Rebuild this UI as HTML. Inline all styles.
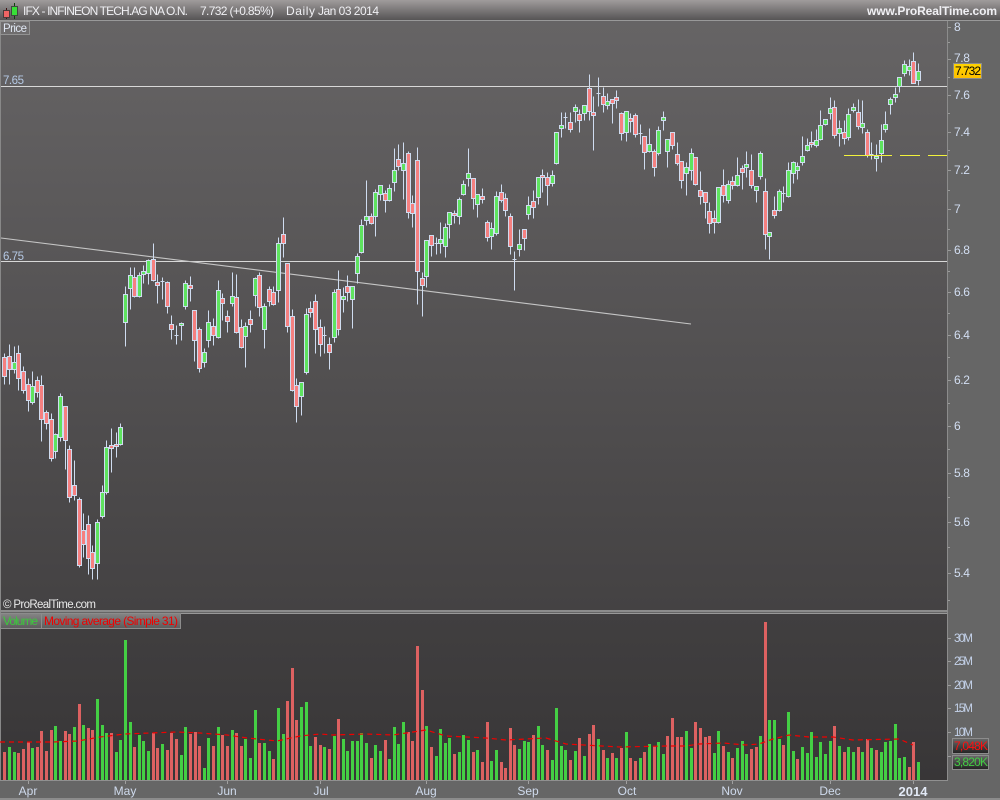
<!DOCTYPE html>
<html><head><meta charset="utf-8"><title>IFX</title>
<style>
html,body{margin:0;padding:0;background:#666;width:1000px;height:800px;overflow:hidden}
svg{display:block}
text{font-family:"Liberation Sans",Arial,sans-serif;font-size:12px}
</style></head><body>
<svg width="1000" height="800" viewBox="0 0 1000 800" xmlns="http://www.w3.org/2000/svg">
<defs>
<linearGradient id="top" x1="0" y1="0" x2="0" y2="1"><stop offset="0" stop-color="#a09c9c"/><stop offset="1" stop-color="#565455"/></linearGradient>
<linearGradient id="price" x1="0" y1="0" x2="0" y2="1"><stop offset="0" stop-color="#666465"/><stop offset="1" stop-color="#444243"/></linearGradient>
<linearGradient id="vol" x1="0" y1="0" x2="0" y2="1"><stop offset="0" stop-color="#413f40"/><stop offset="1" stop-color="#383637"/></linearGradient>
<linearGradient id="tab" x1="0" y1="0" x2="0" y2="1"><stop offset="0" stop-color="#848484"/><stop offset="1" stop-color="#5c5c5c"/></linearGradient>
<linearGradient id="box" x1="0" y1="0" x2="0" y2="1"><stop offset="0" stop-color="#6a6a6a"/><stop offset="1" stop-color="#222"/></linearGradient>
<linearGradient id="gold" x1="0" y1="0" x2="0" y2="1"><stop offset="0" stop-color="#ffd400"/><stop offset="1" stop-color="#ffbf00"/></linearGradient>
</defs>
<rect width="1000" height="800" fill="#666"/>
<rect width="1000" height="20" fill="url(#top)"/>
<rect y="20" width="1000" height="1" fill="#999"/>
<rect x="1" y="21" width="946" height="589" fill="url(#price)"/>
<rect x="0" y="21" width="1" height="759" fill="#888"/>
<rect x="0" y="610" width="948" height="2" fill="#8c8c8c"/>
<rect x="0" y="613" width="948" height="1" fill="#999"/>
<rect x="1" y="614" width="946" height="166" fill="url(#vol)"/>
<rect x="947" y="21" width="1" height="759" fill="#8c8c8c"/>
<rect x="0" y="780" width="948" height="1" fill="#909090"/>
<rect x="0" y="798" width="1000" height="2" fill="#8c8c8c"/>

<!-- logo -->
<g shape-rendering="crispEdges">
<rect x="6" y="8" width="1" height="11" fill="#401010"/>
<rect x="3.5" y="10.5" width="6" height="7" fill="#f06464" stroke="#4a3a3a" stroke-width="1"/>
<rect x="14" y="3" width="1" height="16" fill="#104010"/>
<rect x="11.5" y="6.5" width="6" height="9" fill="#38e038" stroke="#3f4a3f" stroke-width="1"/>
</g>

<!-- header text -->
<g fill="#f0f0f4">
<text x="23" y="15" textLength="165" lengthAdjust="spacing">IFX - INFINEON TECH.AG NA O.N.</text>
<text x="200" y="15" textLength="74" lengthAdjust="spacing">7.732 (+0.85%)</text>
<text x="286" y="15" textLength="29" lengthAdjust="spacing">Daily</text>
<text x="318" y="15" textLength="61" lengthAdjust="spacing">Jan 03 2014</text>
<text x="867" y="15" style="font-weight:700" textLength="130" lengthAdjust="spacing">www.ProRealTime.com</text>
</g>

<!-- Price tab -->
<rect x="0.5" y="21.5" width="29" height="13" fill="#6f6d6e" stroke="#929292"/>
<text x="3" y="32" fill="#dfe6f2" style="font-size:11.5px" textLength="24" lengthAdjust="spacing">Price</text>

<!-- lines -->
<g shape-rendering="crispEdges">
<rect x="1" y="86" width="946" height="1" fill="#d8d8d8"/>
<rect x="1" y="261" width="946" height="1" fill="#d8d8d8"/>
</g>
<path d="M1 238L691 324" stroke="#c6c6c6" stroke-width="1.1" fill="none"/>
<text x="3" y="84" fill="#b4c8e4" style="font-size:11.5px" textLength="21" lengthAdjust="spacing">7.65</text>
<text x="3" y="260" fill="#b4c8e4" style="font-size:11.5px" textLength="21" lengthAdjust="spacing">6.75</text>
<text x="3" y="608" fill="#e8e8e8" style="font-size:11.5px" textLength="93" lengthAdjust="spacing">© ProRealTime.com</text>

<!-- wicks + dojis -->
<g transform="translate(.5,.5)" shape-rendering="crispEdges">
<path fill="none" stroke="#cfdcf0" stroke-width="1" d="M4 353V384M9 344V384M14 346V373M18 345V390M23 366V393M28 378V411M32 371V404M37 376V397M41 375V441M46 410V429M51 413V461M55 433V458M60 393V441M65 406V469M69 445V502M74 460V500M79 497V567M83 513V557M88 515V574M92 545V579M97 519V579M102 485V518M106 440V494M111 428V472M116 432V457M120 423V445M125 286V346M130 267V309M134 267V297M139 272V297M143 265V283M148 259V284M153 243V281M157 274V303M162 277V299M160 281h4M167 281V313M171 315V339M176 325V344M174 335h4M181 322V340M185 280V309M190 276V301M194 310V361M199 327V372M204 348V367M208 310V347M213 318V345M218 280V338M222 293V320M227 310V332M232 272V306M236 274V333M241 319V348M245 322V367M250 310V332M255 277V306M259 272V316M264 303V348M269 286V306M273 286V305M278 237V302M283 217V257M287 263V332M292 309V391M296 378V422M301 382V415M306 308V374M310 301V317M315 294V353M320 319V356M324 326V353M322 335h4M329 337V369M334 289V342M338 270V335M343 287V312M347 275V301M352 286V328M357 253V283M361 219V253M366 180V225M371 213V224M375 189V236M380 185V200M385 190V212M389 184V201M394 148V191M398 144V170M403 142V199M408 151V218M412 195V227M417 147V304M422 272V316M426 240V287M431 235V256M436 237V254M434 243h4M440 222V253M445 223V257M449 212V238M454 210V223M459 197V224M463 180V195M468 148V186M473 178V209M477 194V217M482 188V203M487 220V241M491 222V249M496 191V235M501 184V202M505 193V216M510 213V254M514 251V290M512 259h4M519 229V256M524 229V250M528 196V219M533 190V218M538 177V204M542 169V192M547 172V205M552 170V186M556 132V164M561 112V137M565 112V128M563 117h4M570 112V132M575 104V122M579 109V132M584 105V120M589 74V120M593 96V150M598 77V106M596 93h4M603 87V112M607 93V109M612 99V123M616 90V108M621 112V140M626 111V141M630 113V132M635 113V137M640 124V144M638 133h4M644 136V169M649 128V152M654 149V176M658 126V155M663 111V130M667 139V167M672 132V149M677 142V165M681 161V188M686 162V195M691 148V180M695 157V185M700 171V204M705 192V218M709 202V233M714 210V233M718 187V223M723 169V202M728 180V203M732 176V189M737 157V186M742 165V189M746 151V177M751 154V188M756 186V202M760 151V179M765 178V249M769 232V259M774 196V218M779 189V211M783 186V202M781 193h4M788 162V197M793 161V183M797 162V179M802 136V165M807 138V151M811 131V147M816 129V147M820 110V140M825 119V125M830 97V119M834 100V138M839 120V146M844 120V144M848 108V140M853 103V112M858 99V129M862 100V133M867 129V157M871 142V159M869 154h4M876 144V171M881 124V162M885 111V132M890 97V114M895 87V102M899 77V92M904 60V76M909 59V75M913 52V83M918 63V85"/>
<path fill="#f58080" stroke="#cfdcf0" stroke-width="1" d="M2 357h4V376h-4zM7 356h4V369h-4zM16 353h4V378h-4zM21 371h4V390h-4zM26 384h4V400h-4zM35 380h4V392h-4zM39 385h4V419h-4zM44 412h4V423h-4zM49 419h4V458h-4zM63 406h4V440h-4zM67 449h4V497h-4zM72 485h4V495h-4zM77 499h4V565h-4zM81 530h4V544h-4zM86 524h4V558h-4zM90 552h4V568h-4zM109 445h4V448h-4zM114 444h4V446h-4zM132 277h4V296h-4zM151 259h4V280h-4zM155 282h4V285h-4zM165 282h4V306h-4zM169 324h4V329h-4zM188 285h4V288h-4zM192 310h4V340h-4zM197 329h4V368h-4zM211 326h4V335h-4zM220 298h4V303h-4zM225 316h4V321h-4zM234 297h4V332h-4zM239 327h4V347h-4zM248 319h4V324h-4zM257 275h4V307h-4zM267 289h4V301h-4zM271 292h4V304h-4zM281 234h4V243h-4zM285 263h4V326h-4zM290 316h4V390h-4zM294 385h4V406h-4zM308 308h4V312h-4zM313 301h4V329h-4zM318 327h4V344h-4zM327 344h4V352h-4zM336 289h4V329h-4zM345 286h4V292h-4zM369 216h4V223h-4zM383 193h4V200h-4zM396 159h4V166h-4zM406 153h4V212h-4zM410 203h4V213h-4zM415 160h4V271h-4zM420 278h4V285h-4zM429 235h4V245h-4zM452 213h4V215h-4zM471 178h4V198h-4zM480 196h4V199h-4zM485 222h4V237h-4zM499 192h4V200h-4zM503 198h4V210h-4zM508 216h4V246h-4zM522 229h4V238h-4zM531 201h4V207h-4zM540 175h4V177h-4zM545 177h4V185h-4zM568 122h4V129h-4zM577 114h4V120h-4zM587 88h4V111h-4zM591 112h4V115h-4zM601 96h4V104h-4zM610 99h4V103h-4zM614 97h4V100h-4zM619 113h4V133h-4zM628 118h4V121h-4zM633 115h4V134h-4zM642 136h4V152h-4zM652 151h4V167h-4zM670 132h4V145h-4zM675 154h4V163h-4zM679 161h4V180h-4zM693 157h4V184h-4zM698 190h4V196h-4zM703 192h4V202h-4zM707 211h4V223h-4zM712 218h4V222h-4zM721 185h4V195h-4zM730 181h4V185h-4zM740 168h4V172h-4zM749 170h4V185h-4zM763 191h4V234h-4zM772 210h4V215h-4zM809 142h4V144h-4zM832 107h4V135h-4zM842 132h4V138h-4zM856 112h4V126h-4zM865 132h4V155h-4zM911 61h4V83h-4z"/>
<path fill="#5fe35f" stroke="#cfdcf0" stroke-width="1" d="M12 362h4V369h-4zM30 386h4V402h-4zM53 434h4V451h-4zM58 396h4V437h-4zM95 522h4V563h-4zM100 492h4V516h-4zM104 447h4V492h-4zM118 427h4V444h-4zM123 294h4V322h-4zM128 275h4V288h-4zM137 275h4V296h-4zM141 271h4V274h-4zM146 260h4V273h-4zM179 323h4V325h-4zM183 283h4V306h-4zM202 352h4V362h-4zM206 322h4V340h-4zM216 290h4V337h-4zM230 296h4V303h-4zM243 326h4V336h-4zM253 278h4V295h-4zM262 306h4V329h-4zM276 243h4V290h-4zM299 382h4V396h-4zM304 314h4V372h-4zM332 292h4V337h-4zM341 296h4V299h-4zM350 286h4V299h-4zM355 256h4V273h-4zM359 225h4V252h-4zM364 216h4V220h-4zM373 192h4V216h-4zM378 185h4V194h-4zM387 188h4V200h-4zM392 170h4V182h-4zM401 163h4V170h-4zM424 240h4V276h-4zM438 239h4V243h-4zM443 227h4V246h-4zM447 212h4V224h-4zM457 199h4V216h-4zM461 184h4V194h-4zM466 173h4V178h-4zM475 194h4V204h-4zM489 228h4V236h-4zM494 196h4V233h-4zM517 244h4V249h-4zM526 205h4V214h-4zM536 177h4V197h-4zM550 175h4V183h-4zM554 132h4V163h-4zM559 125h4V128h-4zM573 107h4V111h-4zM582 105h4V113h-4zM605 101h4V105h-4zM624 111h4V132h-4zM647 144h4V151h-4zM656 130h4V153h-4zM661 117h4V120h-4zM665 139h4V151h-4zM684 167h4V173h-4zM689 153h4V170h-4zM716 187h4V222h-4zM726 184h4V200h-4zM735 175h4V185h-4zM744 164h4V167h-4zM754 186h4V190h-4zM758 153h4V176h-4zM767 232h4V236h-4zM777 191h4V210h-4zM786 170h4V196h-4zM791 162h4V173h-4zM795 166h4V170h-4zM800 156h4V162h-4zM805 145h4V150h-4zM814 140h4V145h-4zM818 125h4V139h-4zM823 119h4V124h-4zM828 108h4V113h-4zM837 128h4V133h-4zM846 114h4V137h-4zM851 107h4V110h-4zM860 123h4V127h-4zM874 156h4V158h-4zM879 140h4V153h-4zM883 124h4V129h-4zM888 99h4V104h-4zM893 94h4V97h-4zM897 77h4V86h-4zM902 64h4V73h-4zM907 66h4V70h-4zM916 71h4V80h-4z"/>
</g>

<!-- yellow levels -->
<path d="M844 155.5H892M900 155.5H920M928 155.5H947" stroke="#f2f23c" stroke-width="1" fill="none" shape-rendering="crispEdges"/>

<!-- right price axis -->
<path d="M948 27.5h3M948 42.5h2M948 59.5h3M948 77.5h2M948 95.5h3M948 113.5h2M948 132.5h3M948 150.5h2M948 170.5h3M948 190.5h2M948 209.5h3M948 229.5h2M948 250.5h3M948 271.5h2M948 292.5h3M948 313.5h2M948 335.5h3M948 357.5h2M948 380.5h3M948 403.5h2M948 426.5h3M948 449.5h2M948 473.5h3M948 497.5h2M948 522.5h3M948 547.5h2M948 573.5h3M948 600.5h2" stroke="#9a9a9a" stroke-width="1" fill="none" shape-rendering="crispEdges"/>
<g fill="#d2def2" style="letter-spacing:-.4px">
<text x="954" y="31">8</text>
<text x="954" y="62">7.8</text>
<text x="954" y="99">7.6</text>
<text x="954" y="136">7.4</text>
<text x="954" y="174">7.2</text>
<text x="954" y="213">7</text>
<text x="954" y="254">6.8</text>
<text x="954" y="296">6.6</text>
<text x="954" y="339">6.4</text>
<text x="954" y="384">6.2</text>
<text x="954" y="430">6</text>
<text x="954" y="477">5.8</text>
<text x="954" y="526">5.6</text>
<text x="954" y="577">5.4</text>
</g>
<rect x="953.5" y="63.5" width="28" height="15" fill="url(#gold)" stroke="#8c8c8c"/>
<text x="955" y="75" fill="#000" textLength="26" lengthAdjust="spacing">7.732</text>

<!-- legend -->
<rect x="0.5" y="613.5" width="41" height="15" fill="url(#tab)" stroke="#8c8c8c"/>
<rect x="41.5" y="613.5" width="139" height="15" fill="url(#tab)" stroke="#8c8c8c"/>
<text x="3" y="625" fill="#3cc83c" textLength="35" lengthAdjust="spacing">Volume</text>
<text x="44" y="625" fill="#f00000" textLength="134" lengthAdjust="spacing">Moving average (Simple 31)</text>

<!-- volume bars -->
<g transform="translate(.5,0)" stroke-width="3" fill="none" shape-rendering="crispEdges">
<path stroke="#dd6161" d="M4 752V780M18 753V780M23 749V780M28 742V780M37 747V780M41 731V780M46 751V780M51 730V780M65 731V780M69 734V780M79 704V780M88 728V780M92 730V780M111 733V780M134 747V780M153 733V780M157 748V780M167 750V780M171 733V780M176 739V780M190 734V780M195 732V780M199 746V780M213 746V780M222 735V780M227 746V780M236 733V780M241 746V780M259 743V780M273 759V780M287 701V780M292 668V780M296 720V780M315 737V780M320 745V780M329 749V780M338 719V780M371 758V780M385 740V780M408 732V780M412 741V780M417 646V780M422 690V780M431 747V780M454 754V780M473 752V780M482 762V780M487 722V780M501 762V780M505 768V780M510 728V780M514 745V780M533 735V780M547 750V780M570 760V780M579 738V780M589 734V780M593 725V780M603 750V780M612 753V780M621 748V780M630 758V780M635 761V780M644 752V780M654 746V780M667 736V780M672 718V780M677 737V780M681 737V780M695 722V780M700 728V780M705 737V780M709 736V780M723 746V780M732 758V780M751 749V780M756 747V780M765 622V780M783 745V780M797 759V780M834 726V780M844 752V780M858 747V780M867 739V780M876 750V780M909 767V780M913 742V780"/>
<path stroke="#44cf44" d="M9 747V780M14 752V780M32 748V780M55 726V780M60 741V780M74 727V780M83 725V780M97 699V780M102 725V780M106 733V780M116 752V780M120 740V780M125 640V780M130 722V780M139 735V780M143 741V780M148 751V780M162 744V780M181 755V780M185 727V780M204 768V780M208 738V780M218 727V780M232 730V780M245 739V780M250 758V780M255 710V780M264 743V780M269 751V780M278 708V780M283 734V780M301 707V780M306 702V780M310 746V780M324 747V780M334 736V780M343 739V780M347 751V780M352 741V780M357 741V780M361 733V780M366 743V780M375 745V780M380 751V780M389 759V780M394 727V780M398 744V780M403 722V780M426 726V780M436 756V780M440 729V780M445 743V780M449 738V780M459 752V780M463 735V780M468 740V780M477 750V780M491 761V780M496 750V780M519 749V780M524 741V780M528 742V780M538 726V780M542 745V780M552 760V780M556 708V780M561 746V780M565 750V780M575 751V780M584 756V780M598 739V780M607 758V780M616 758V780M626 732V780M640 758V780M649 744V780M658 742V780M663 754V780M686 731V780M691 748V780M714 753V780M718 731V780M728 752V780M737 748V780M742 741V780M746 754V780M760 736V780M769 720V780M774 720V780M779 739V780M788 712V780M793 751V780M802 747V780M807 753V780M811 732V780M816 757V780M820 742V780M825 754V780M830 741V780M839 746V780M848 747V780M853 752V780M862 752V780M871 748V780M881 752V780M885 742V780M890 741V780M895 724V780M899 758V780M904 757V780M918 762V780"/>
</g>

<!-- moving average -->
<path d="M0 742L28 742L53 742L78 741L100 737L125 734L150 733L177 732L200 733L227 735L247 738L277 741L300 736L320 734L333 735L366 734L393 735L426 730L446 736L486 738L506 740L546 738L566 744L620 747L666 746L686 746L699 744L723 743L746 745L759 744L773 739L789 735L809 737L833 737L853 740L899 739L913 745" fill="none" stroke="#f00000" stroke-width="1.2" stroke-dasharray="5 4"/>

<!-- volume axis -->
<path d="M948 638.5h3M948 661.5h3M948 685.5h3M948 708.5h3M948 732.5h3M948 756.5h3" stroke="#9a9a9a" fill="none" shape-rendering="crispEdges"/>
<g fill="#c4d2ea">
<text x="954" y="642" style="font-size:11.5px" textLength="19" lengthAdjust="spacing">30M</text>
<text x="954" y="665" style="font-size:11.5px" textLength="19" lengthAdjust="spacing">25M</text>
<text x="954" y="689" style="font-size:11.5px" textLength="19" lengthAdjust="spacing">20M</text>
<text x="954" y="712" style="font-size:11.5px" textLength="19" lengthAdjust="spacing">15M</text>
<text x="954" y="736" style="font-size:11.5px" textLength="19" lengthAdjust="spacing">10M</text>
</g>
<rect x="952.5" y="738.5" width="36" height="15" fill="url(#box)" stroke="#8c8c8c"/>
<rect x="952.5" y="755.5" width="36" height="14" fill="url(#box)" stroke="#8c8c8c"/>
<text x="954" y="750" fill="#ff1010" textLength="34" lengthAdjust="spacing">7,048K</text>
<text x="954" y="766" fill="#44cc44" textLength="34" lengthAdjust="spacing">3,820K</text>

<!-- date axis -->
<path d="M28.5 781v3M125.5 781v3M227.5 781v3M320.5 781v3M426.5 781v3M528.5 781v3M626.5 781v3M732.5 781v3M830.5 781v3M913.5 781v3" stroke="#a0a0a0" fill="none" shape-rendering="crispEdges"/>
<g fill="#cfdaec" text-anchor="middle">
<text x="28" y="795">Apr</text>
<text x="125" y="795">May</text>
<text x="227" y="795">Jun</text>
<text x="321" y="795">Jul</text>
<text x="426" y="795">Aug</text>
<text x="528" y="795">Sep</text>
<text x="627" y="795">Oct</text>
<text x="732" y="795">Nov</text>
<text x="830" y="795">Dec</text>
<text x="913" y="796" style="font-weight:700;font-size:13px;fill:#e2e9f5">2014</text>
</g>
</svg>
</body></html>
